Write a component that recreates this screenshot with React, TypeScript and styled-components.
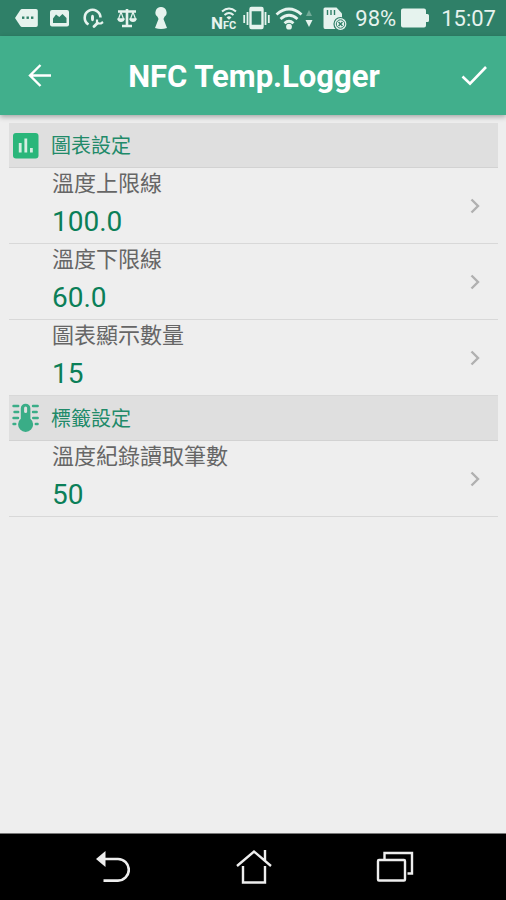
import React from "react";
import styled, { createGlobalStyle } from "styled-components";

const GlobalStyle = createGlobalStyle`
  *, *::before, *::after { box-sizing: border-box; }
  body {
    margin: 0;
    background: #eeeeee;
    font-family: Roboto, "Noto Sans CJK TC", sans-serif;
  }
  button { font: inherit; border: 0; padding: 0; background: none; cursor: pointer; }
  h1, h2, ul { margin: 0; padding: 0; }
  svg { display: block; flex: none; }
`;

const Screen = styled.div`
  display: flex;
  flex-direction: column;
  min-height: 100vh;
  background: #eeeeee;
`;

const StatusBar = styled.div`
  display: flex;
  align-items: center;
  justify-content: space-between;
  height: 36px;
  padding: 0 10px 0 15px;
  background: #2f8068;
  color: #e6f3ee;
`;

const StatusGroup = styled.div<{ $gap: number }>`
  display: flex;
  align-items: center;
  gap: ${({ $gap }) => $gap}px;
`;

const StatusText = styled.span`
  font-size: 22px;
  line-height: 36px;
  padding-top: 2px;
`;

const Clock = styled(StatusText)`
  margin-left: 7px;
`;

const AppBar = styled.header`
  display: flex;
  align-items: center;
  justify-content: space-between;
  height: 79px;
  padding: 0 8px 0 16px;
  background: #41af8c;
  color: #ffffff;
  box-shadow: 0 2px 5px rgba(0, 0, 0, 0.3);
`;

const BarButton = styled.button`
  display: grid;
  place-items: center;
  width: 48px;
  height: 48px;
  color: #ffffff;
`;

const Title = styled.h1`
  flex: 1;
  padding: 2px 6px 0 0;
  font-size: 31px;
  line-height: 40px;
  font-weight: 700;
  text-align: center;
`;

const Content = styled.main`
  flex: 1;
  padding: 8px 8px 16px 9px;
`;

const SectionHeader = styled.div`
  display: flex;
  align-items: center;
  gap: 12px;
  height: 45px;
  padding-left: 3px;
  background: #dfdfdf;
  border-bottom: 1px solid #d2d2d2;
`;

const SectionTitle = styled.h2`
  font-size: 20px;
  line-height: 30px;
  font-weight: 400;
  padding-top: 2px;
  color: #218a69;
`;

const SettingList = styled.ul`
  list-style: none;
`;

const SettingRow = styled.button`
  display: flex;
  align-items: center;
  justify-content: space-between;
  width: 100%;
  padding: 0 18px 0 43px;
  border-bottom: 1px solid #d8d8d8;
  text-align: left;
`;

const SettingLabel = styled.span`
  display: block;
  font-size: 22px;
  line-height: 32px;
  color: #666666;
`;

const SettingValue = styled.span`
  display: block;
  font-size: 28px;
  line-height: 43px;
  color: #0b7f58;
`;

const NavBar = styled.nav`
  display: grid;
  grid-template-columns: repeat(3, 1fr);
  height: 67px;
  padding: 0 41px 0 43px;
  background: #000000;
  border-top: 1px solid #777777;
`;

const NavButton = styled.button`
  display: grid;
  place-items: center;
  color: #eeeeee;
`;

const MessageIcon = () => (
  <svg width="24" height="24" viewBox="0 0 24 24" fill="currentColor" aria-hidden="true">
    <path d="M7 3h14q1.800 0 1.800 1.800v14.400q0 1.800-1.800 1.800h-14q-1 0-1.700-.9L0 12l5.300-8.100Q6 3 7 3z" />
    <g fill="#2f8068">
      <rect x="7" y="10.500" width="2.400" height="2.400" />
      <rect x="11.500" y="10.500" width="2.400" height="2.400" />
      <rect x="16" y="10.500" width="2.400" height="2.400" />
    </g>
  </svg>
);

const PictureIcon = () => (
  <svg width="24" height="24" viewBox="0 0 24 24" aria-hidden="true">
    <rect x="1" y="4" width="19" height="16.500" rx="2" fill="currentColor" />
    <path d="M4 17V12.500l3-4 3.300 2.500 3.200-3 4 4V17z" fill="#2f8068" />
  </svg>
);

const ServiceIcon = () => (
  <svg width="24" height="24" viewBox="0 0 24 24" fill="none" stroke="currentColor" aria-hidden="true">
    <path d="M5.500 18.500A7.900 7.900 0 1 1 17.500 11.500" strokeWidth="2.600" />
    <ellipse cx="9.500" cy="12" rx="1.500" ry="3.200" fill="currentColor" stroke="none" />
    <path d="M11 20.500l3.500-3.500" strokeWidth="2.800" strokeLinecap="round" />
    <path d="M14 13.500v4h4l2-1.500" strokeWidth="2.200" />
  </svg>
);

const ScalesIcon = () => (
  <svg width="24" height="24" viewBox="0 0 24 24" fill="none" stroke="currentColor" aria-hidden="true">
    <path d="M1 5.500h18M10 3v16M5 20h10" strokeWidth="2.600" />
    <path d="M4 6L1.500 13h5zM16 6l-2.500 7h5z" strokeWidth="1.200" />
    <path d="M0 12.500h8q-1 3.500-4 3.500t-4-3.500zM12 12.500h8q-1 3.500-4 3.500t-4-3.500z" fill="currentColor" stroke="none" />
  </svg>
);

const KeyholeIcon = () => (
  <svg width="24" height="24" viewBox="0 0 24 24" fill="currentColor" aria-hidden="true">
    <path d="M10 1a5.500 5.500 0 0 0-3.500 9.800L7.500 13 4 22q6 2 12 0L12.500 13l1-2.200A5.500 5.500 0 0 0 10 1z" />
  </svg>
);

const NfcIcon = () => (
  <svg width="28" height="34" viewBox="0 -4 28 34" fill="none" stroke="currentColor" aria-label="NFC">
    <path d="M12 6.500q7-6 14 0M14.500 10q4.500-4 9 0" strokeWidth="2" />
    <path d="M16.500 12.500q2.500-2.500 5 0l-2.500 2.300z" fill="currentColor" stroke="none" />
    <g fill="currentColor" stroke="none" fontFamily="Roboto, sans-serif" fontWeight="700">
      <text x="1" y="24" fontSize="17">N</text>
      <text x="13" y="24" fontSize="11">FC</text>
    </g>
  </svg>
);

const VibrateIcon = () => (
  <svg width="27" height="26" viewBox="0 0 27 26" fill="none" stroke="currentColor" aria-hidden="true">
    <rect x="7.500" y="3" width="12" height="20" rx="1" strokeWidth="2.400" />
    <path d="M7 4.500h13M7 21.500h13" strokeWidth="3.500" />
    <path d="M4.500 7v13M22.500 7v13M1.200 10v8M25.800 10v8" strokeWidth="1.800" />
  </svg>
);

const WifiIcon = () => (
  <svg width="38" height="26" viewBox="0 0 38 26" fill="none" stroke="currentColor" aria-hidden="true">
    <path d="M1.500 9.500q12.500-11 25 0M5.500 14q8.500-7.500 17 0M9.500 18.200q4.500-4 9 0" strokeWidth="2.800" />
    <circle cx="14" cy="21.700" r="2.900" fill="currentColor" stroke="none" />
    <path d="M31 11l3-6 3 6z" fill="#72ab98" stroke="none" />
    <path d="M30.500 15h7l-3.500 7z" fill="currentColor" stroke="none" />
  </svg>
);

const StorageIcon = () => (
  <svg width="32" height="26" viewBox="-5 0 32 26" aria-hidden="true">
    <path d="M2 2.500h11.500l5.500 6V22q0 2-2 2H2q-1.500 0-1.500-2V4q0-1.500 1.500-1.500z" fill="currentColor" />
    <path d="M4.500 5v5M8 5v5M11.500 5v5" stroke="#2f8068" strokeWidth="1.400" />
    <circle cx="17.500" cy="19" r="6.500" fill="currentColor" stroke="#2f8068" strokeWidth="1.200" />
    <circle cx="17.500" cy="19" r="4.200" fill="none" stroke="#2f8068" strokeWidth="1" />
    <path d="M15.500 17l4 4M19.500 17l-4 4" stroke="#2f8068" strokeWidth="1.400" />
  </svg>
);

const BatteryIcon = () => (
  <svg width="28" height="20" viewBox="0 0 28 20" fill="currentColor" aria-hidden="true">
    <path d="M2 .5h21q2 0 2 2V6h1.500q1.500 0 1.500 1.500v5q0 1.500-1.500 1.500H25v3.500q0 2-2 2H2q-2 0-2-2v-15q0-2 2-2z" />
  </svg>
);

const ArrowLeft = () => (
  <svg width="26" height="26" viewBox="0 0 26 26" fill="none" stroke="currentColor" strokeWidth="2.400" aria-hidden="true">
    <path d="M24 12.500H3M13.500 2L3 12.500 13.500 23" />
  </svg>
);

const CheckIcon = () => (
  <svg width="26" height="22" viewBox="0 0 26 22" fill="none" stroke="currentColor" strokeWidth="2.600" aria-hidden="true">
    <path d="M1.500 11.500l7.500 7.200L25 2" />
  </svg>
);

const ChartIcon = () => (
  <svg width="27" height="27" viewBox="0 0 27 27" aria-hidden="true">
    <rect x="1" y="1" width="25.500" height="25.500" rx="3" fill="#2ab67a" />
    <path d="M8.200 11v9.500M13.800 6.500v14M19.400 16v4.500" stroke="#d5eee2" strokeWidth="2.800" />
  </svg>
);

const ThermometerIcon = () => (
  <svg width="27" height="30" viewBox="0 0 27 30" aria-hidden="true">
    <path d="M8.800 5.500a4.800 4.800 0 0 1 9.600 0v10.200a7.500 7.500 0 1 1-9.600 0z" fill="#3aad87" />
    <path d="M13.600 5v3.500" stroke="#dfdfdf" strokeWidth="3" strokeLinecap="round" />
    <path
      d="M1.500 3h4.700M2.500 9h3.700M1.500 15h4.500M1.500 21h1.800M21 3h4.700M21 9h3.700M21.200 15h4.500M23.800 21h1.800"
      stroke="#3aad87"
      strokeWidth="2.400"
      strokeLinecap="round"
    />
  </svg>
);

const Chevron = () => (
  <svg width="10" height="16" viewBox="0 0 10 16" fill="none" stroke="#b0b0b0" strokeWidth="2.400" aria-hidden="true">
    <path d="M1.500 1.500L8 8l-6.500 6.500" />
  </svg>
);

const NavBackIcon = () => (
  <svg width="34" height="34" viewBox="0 0 34 34" aria-hidden="true">
    <path d="M8 9h14a10.800 10.800 0 0 1 0 21.600H7.500" fill="none" stroke="currentColor" strokeWidth="2.600" />
    <path d="M0 9l9.500-8v16z" fill="currentColor" />
  </svg>
);

const NavHomeIcon = () => (
  <svg width="36" height="36" viewBox="0 0 36 36" fill="none" stroke="currentColor" strokeWidth="2.400" aria-hidden="true">
    <path d="M1 17L18 2.500 35 17M29 1v11M7 17v16.500h22V17" />
  </svg>
);

const NavRecentsIcon = () => (
  <svg width="38" height="32" viewBox="0 0 38 32" fill="none" stroke="currentColor" strokeWidth="2.400" aria-hidden="true">
    <rect x="2" y="9" width="27" height="20.500" rx="1" />
    <path d="M8.500 8V2h27.500v20.500h-4.500" />
  </svg>
);

interface Setting {
  label: string;
  value: string;
}

interface Section {
  title: string;
  icon: React.ReactNode;
  settings: Setting[];
}

const sections: Section[] = [
  {
    title: "圖表設定",
    icon: <ChartIcon />,
    settings: [
      { label: "溫度上限線", value: "100.0" },
      { label: "溫度下限線", value: "60.0" },
      { label: "圖表顯示數量", value: "15" },
    ],
  },
  {
    title: "標籤設定",
    icon: <ThermometerIcon />,
    settings: [{ label: "溫度紀錄讀取筆數", value: "50" }],
  },
];

export default function App() {
  return (
    <Screen lang="zh-Hant">
      <GlobalStyle />
      <StatusBar>
        <StatusGroup $gap={10}>
          <MessageIcon />
          <PictureIcon />
          <ServiceIcon />
          <ScalesIcon />
          <KeyholeIcon />
        </StatusGroup>
        <StatusGroup $gap={5}>
          <NfcIcon />
          <VibrateIcon />
          <WifiIcon />
          <StorageIcon />
          <StatusText>98%</StatusText>
          <BatteryIcon />
          <Clock>15:07</Clock>
        </StatusGroup>
      </StatusBar>
      <AppBar>
        <BarButton aria-label="返回">
          <ArrowLeft />
        </BarButton>
        <Title>NFC Temp.Logger</Title>
        <BarButton aria-label="確認">
          <CheckIcon />
        </BarButton>
      </AppBar>
      <Content>
        {sections.map((section) => (
          <section key={section.title}>
            <SectionHeader>
              {section.icon}
              <SectionTitle>{section.title}</SectionTitle>
            </SectionHeader>
            <SettingList>
              {section.settings.map((setting) => (
                <li key={setting.label}>
                  <SettingRow>
                    <span>
                      <SettingLabel>{setting.label}</SettingLabel>
                      <SettingValue>{setting.value}</SettingValue>
                    </span>
                    <Chevron />
                  </SettingRow>
                </li>
              ))}
            </SettingList>
          </section>
        ))}
      </Content>
      <NavBar>
        <NavButton aria-label="返回">
          <NavBackIcon />
        </NavButton>
        <NavButton aria-label="首頁">
          <NavHomeIcon />
        </NavButton>
        <NavButton aria-label="最近使用的應用程式">
          <NavRecentsIcon />
        </NavButton>
      </NavBar>
    </Screen>
  );
}
